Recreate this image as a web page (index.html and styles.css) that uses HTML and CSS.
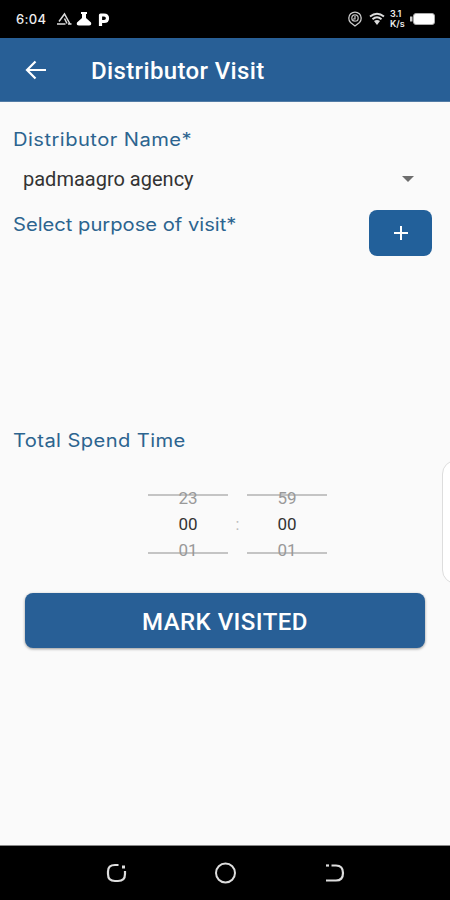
FILE: index.html
```html
<!DOCTYPE html>
<html lang="en">
<head>
    <meta charset="UTF-8">
    <meta name="viewport" content="width=device-width, initial-scale=1.0">
    <title>Distributor Visit</title>
    <link rel="stylesheet" href="styles.css">
</head>
<body>
    <div class="screen">

        <div class="status-bar">
            <span class="clock">6:04</span>
            <svg class="notifications" width="56" height="18" viewBox="0 0 56 18">
                <path d="M3 11.500 L8.500 4 L14 14 M8.500 8.500 L11 13.500 M1 14 H9.500 M12 14 H15.500" fill="none" stroke="#ddd" stroke-width="1.500"/>
                <path d="M25 2 H31 V4 H30 V8 L35 12.500 Q36 15.500 33 15.500 H23 Q20 15.500 21 12.500 L26 8 V4 H25 Z" fill="#fff"/>
                <path d="M44.500 16 V5 H48 Q51.500 5 51.500 8.200 Q51.500 11.500 48 11.500 H45" fill="none" stroke="#fff" stroke-width="3.200" stroke-linejoin="round"/>
            </svg>
            <svg class="location" width="16" height="18" viewBox="0 0 16 18">
                <path d="M8 16 L3.500 12.500 A6.200 6.200 0 1 1 12.500 12.500 Z" fill="none" stroke="#ccc" stroke-width="1.300"/>
                <circle cx="8" cy="8" r="3.200" fill="none" stroke="#bbb" stroke-width="1.300"/>
                <path d="M8 6 V9 H6" fill="none" stroke="#ccc" stroke-width="1.200"/>
            </svg>
            <svg class="wifi" width="16" height="14" viewBox="0 0 16 14">
                <path d="M1 4.500 Q8 -1 15 4.500 M3.500 7.200 Q8 3.500 12.500 7.200" fill="none" stroke="#ddd" stroke-width="1.900"/>
                <path d="M5 9 Q8 6.800 11 9 L8 13 Z" fill="#ddd"/>
            </svg>
            <div class="speed">
                <span>3.1</span>
                <span>K/s</span>
            </div>
            <svg class="battery" width="26" height="14" viewBox="0 0 26 14">
                <rect x="0" y="4.500" width="2.500" height="5" fill="#ccc"/>
                <rect x="3.500" y="1.500" width="21" height="11" rx="2.500" fill="#fff" stroke="#aaa" stroke-width="1"/>
            </svg>
        </div>

        <div class="app-bar">
            <svg class="back" width="22" height="20" viewBox="0 0 22 20">
                <path d="M21 10 H2 M10.500 1.500 L2 10 L10.500 18.500" fill="none" stroke="#fff" stroke-width="2.200"/>
            </svg>
            <h1>Distributor Visit</h1>
        </div>

        <div class="content">
            <label class="label label-name">Distributor Name*</label>
            <div class="select">
                <span>padmaagro agency</span>
                <span class="caret"></span>
            </div>
            <div class="purpose">
                <label class="label label-purpose">Select purpose of visit*</label>
                <button class="add-button">
                    <svg width="16" height="16" viewBox="0 0 16 16">
                        <path d="M8 1 V15 M1 8 H15" stroke="#fff" stroke-width="2"/>
                    </svg>
                </button>
            </div>
            <label class="label label-time">Total Spend Time</label>

            <div class="time-picker">
                <div class="wheel">
                    <span>23</span>
                    <span class="current">00</span>
                    <span>01</span>
                </div>
                <span class="colon">:</span>
                <div class="wheel">
                    <span>59</span>
                    <span class="current">00</span>
                    <span>01</span>
                </div>
            </div>

            <button class="mark-button">MARK VISITED</button>
            <!-- Edge panel handle -->
            <div class="edge-handle"></div>
        </div>

        <div class="nav-bar">
            <svg width="22" height="22" viewBox="0 0 22 22">
                <path d="M12.500 3 H9 Q2 3 2 9.500 V12 Q2 19 9 19 H12 Q19 19 19 12 V9" fill="none" stroke="#ddd" stroke-width="2.200"/>
                <rect x="16" y="3.500" width="3" height="3" fill="#ddd"/>
            </svg>
            <svg width="22" height="22" viewBox="0 0 22 22">
                <circle cx="10.500" cy="11" r="9.500" fill="none" stroke="#ddd" stroke-width="2"/>
            </svg>
            <svg width="22" height="22" viewBox="0 0 22 22">
                <path d="M7.500 3.500 H12 Q19 3.500 19 11 Q19 18.500 12 18.500 H2" fill="none" stroke="#ddd" stroke-width="2.200"/>
                <rect x="2" y="2.400" width="3" height="2.200" fill="#ddd"/>
            </svg>
        </div>
    </div>
</body>
</html>
```
FILE: styles.css
```css
* {
    box-sizing: border-box;
}

body {
    margin: 0;
    font-family: Roboto, sans-serif;
    background-color: #fafafa;
}

.screen {
    display: flex;
    flex-direction: column;
    width: 450px;
    height: 900px;
    overflow: hidden;
}

.status-bar {
    display: flex;
    align-items: center;
    height: 38px;
    padding: 0 15px 0 16px;
    background-color: #000;
    color: #eee;
}

.clock {
    width: 40px;
    font-family: Inter, sans-serif;
    font-size: 13px;
    font-weight: 500;
    letter-spacing: 0.3px;
    white-space: nowrap;
}

.notifications {
    margin-right: auto;
}

.location {
    margin-right: 6px;
}

.wifi {
    margin-right: 5px;
}

.speed {
    display: flex;
    flex-direction: column;
    width: 20px;
    font-family: Inter, sans-serif;
    font-size: 9px;
    font-weight: 600;
    line-height: 10px;
}

.battery {
    margin-right: -1px;
}

.app-bar {
    display: flex;
    align-items: center;
    height: 64px;
    padding-left: 25px;
    background-color: #285f96;
    border-bottom: 1px solid #527ca6;
    color: #fff;
}

.app-bar h1 {
    margin: 2px 0 0 44px;
    font-size: 24px;
    font-weight: 500;
    line-height: 28px;
    letter-spacing: 0.36px;
}

.content {
    position: relative;
    display: flex;
    flex-direction: column;
    flex: 1;
    padding: 26px 13px 0;
}

.label {
    align-self: flex-start;
    font-family: Inter, sans-serif;
    font-size: 18px;
    line-height: 24px;
    color: #2c648f;
    white-space: nowrap;
    transform: scaleX(1.12);
    transform-origin: left;
}

.label-name {
    letter-spacing: 0.4px;
}

.label-purpose {
    margin-top: 1px;
    letter-spacing: 0;
}

.label-time {
    letter-spacing: 0.35px;
}

.select {
    display: flex;
    align-items: center;
    justify-content: space-between;
    height: 56px;
    padding: 0 23px 2px 10px;
    font-size: 20px;
    color: #333;
}

.caret {
    border-left: 6px solid transparent;
    border-right: 6px solid transparent;
    border-top: 6px solid #6d6d6d;
}

.purpose {
    display: flex;
    justify-content: space-between;
    align-items: flex-start;
    height: 221px;
    padding: 4px 5px 0 0;
}

.add-button {
    display: flex;
    align-items: center;
    justify-content: center;
    width: 63px;
    height: 46px;
    margin-top: -2px;
    padding: 0;
    border: none;
    border-radius: 8px;
    background-color: #22609a;
}

.time-picker {
    display: flex;
    align-items: center;
    gap: 4px;
    height: 60px;
    margin: 41px 0 39px 135px;
}

.wheel {
    display: flex;
    flex-direction: column;
    align-items: center;
    justify-content: center;
    width: 80px;
    height: 60px;
    border-top: 2px solid #c4c4c4;
    border-bottom: 2px solid #c4c4c4;
    font-size: 17px;
    line-height: 26px;
    color: #999;
}

.wheel .current {
    color: #333;
}

.colon {
    width: 11px;
    text-align: center;
    font-size: 16px;
    color: #bbb;
}

.mark-button {
    height: 55px;
    margin: 0 12px;
    padding: 2px 0 0;
    border: none;
    border-radius: 8px;
    background-color: #285f96;
    box-shadow: 0 1px 3px rgba(0, 0, 0, 0.4);
    color: #fff;
    font-family: Roboto, sans-serif;
    font-size: 24px;
    font-weight: 500;
    letter-spacing: 0.45px;
}

.edge-handle {
    position: absolute;
    top: 358px;
    right: -24px;
    width: 32px;
    height: 124px;
    border: 1px solid #ddd;
    border-radius: 14px;
    background-color: #fff;
}

.nav-bar {
    display: flex;
    align-items: center;
    justify-content: center;
    gap: 87px;
    height: 55px;
    padding-left: 1px;
    border-top: 1px solid #888;
    background-color: #000;
}
```
